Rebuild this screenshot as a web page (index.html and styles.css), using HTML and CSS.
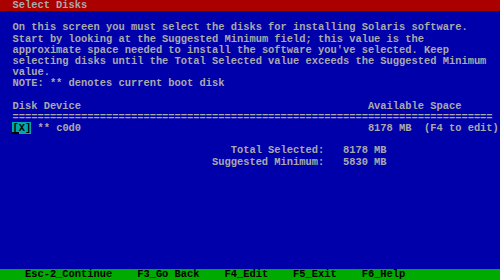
FILE: index.html
```html
<!DOCTYPE html>
<html lang="en">
<head>
    <meta charset="UTF-8">
    <meta name="viewport" content="width=device-width, initial-scale=1.0">
    <title>Select Disks</title>
    <link rel="stylesheet" href="styles.css">
</head>
<body>
    <div class="screen">
        <div class="row title-bar">Select Disks</div>

        <div class="content">
            <div class="row"></div>
            <div class="row">On this screen you must select the disks for installing Solaris software.</div>
            <div class="row">Start by looking at the Suggested Minimum field; this value is the</div>
            <div class="row">approximate space needed to install the software you've selected. Keep</div>
            <div class="row">selecting disks until the Total Selected value exceeds the Suggested Minimum</div>
            <div class="row">value.</div>
            <div class="row">NOTE: ** denotes current boot disk</div>
            <div class="row"></div>

            <div class="row"><span class="disk-col">Disk Device</span><span>Available Space</span></div>
            <div class="row">=============================================================================</div>
            <div class="row"><span class="disk-col"><span class="check"><span class="cursor">[</span>X]</span> ** c0d0</span><span>8178 MB  (F4 to edit)</span></div>
            <div class="row"></div>

            <div class="row"><span class="sum-label">Total Selected:</span><span class="sum-value">8178 MB</span></div>
            <div class="row"><span class="sum-label">Suggested Minimum:</span><span class="sum-value">5830 MB</span></div>
        </div>

        <div class="row key-bar">
            <span>Esc-2_Continue</span>
            <span>F3_Go Back</span>
            <span>F4_Edit</span>
            <span>F5_Exit</span>
            <span>F6_Help</span>
        </div>
    </div>
</body>
</html>
```

FILE: styles.css
```css
body {
    margin: 0;
    background-color: #0000aa;
}

.screen {
    width: 500px;
    height: 280px;
    display: flex;
    flex-direction: column;
    font-family: "Liberation Mono", "DejaVu Sans Mono", monospace;
    font-size: 10.4px;
    font-weight: bold;
    color: #aaaaaa;
    background-color: #0000aa;
    overflow: hidden;
}

.row {
    height: 11.2px;
    line-height: 11.2px;
    white-space: pre;
}

.title-bar {
    background-color: #aa0000;
    padding-left: 2ch;
}

.content {
    flex: 1;
    padding-left: 2ch;
}

.disk-col {
    display: inline-block;
    width: 57ch;
}

.check {
    background-color: #00aaaa;
    color: #000000;
}

.cursor {
    box-shadow: inset 0 -2px #000000;
}

.sum-label {
    display: inline-block;
    width: 50ch;
    text-align: right;
}

.sum-value {
    margin-left: 3ch;
}

.key-bar {
    display: flex;
    gap: 4ch;
    padding-left: 4ch;
    background-color: #00aa00;
    color: #000000;
}
```
